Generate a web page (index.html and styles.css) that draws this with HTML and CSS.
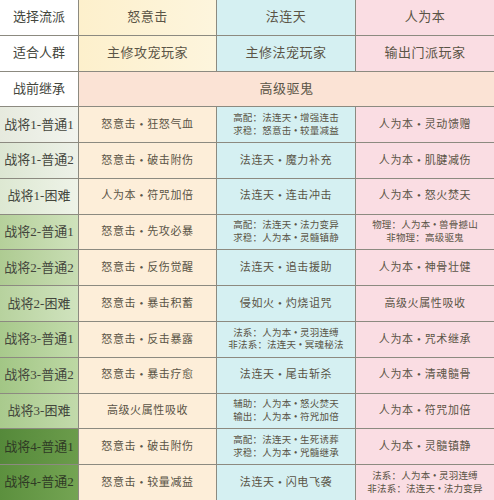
FILE: index.html
```html
<!DOCTYPE html>
<html lang="zh">
<head>
<meta charset="utf-8">
<link rel="stylesheet" href="styles.css">
</head>
<body>
<div class="table">
  <div class="cell label white">选择流派</div>
  <div class="cell head c-yellow">怒意击</div>
  <div class="cell head c-cyan">法连天</div>
  <div class="cell head c-pink">人为本</div>

  <div class="cell label white">适合人群</div>
  <div class="cell head c-yellow">主修攻宠玩家</div>
  <div class="cell head c-cyan">主修法宠玩家</div>
  <div class="cell head c-pink">输出门派玩家</div>

  <div class="cell label white">战前继承</div>
  <div class="cell head span3">高级驱鬼</div>

  <div class="cell label g1">战将1-普通1</div>
  <div class="cell c-cream">怒意击 • 狂怒气血</div>
  <div class="cell c-cyan small">高配：法连天 • 增强连击<br>求稳：怒意击 • 较量减益</div>
  <div class="cell c-pink">人为本 • 灵动馈赠</div>

  <div class="cell label g2">战将1-普通2</div>
  <div class="cell c-cream">怒意击 • 破击附伤</div>
  <div class="cell c-cyan">法连天 • 魔力补充</div>
  <div class="cell c-pink">人为本 • 肌腱减伤</div>

  <div class="cell label g3">战将1-困难</div>
  <div class="cell c-cream">人为本 • 符咒加倍</div>
  <div class="cell c-cyan">法连天 • 连击冲击</div>
  <div class="cell c-pink">人为本 • 怒火焚天</div>

  <div class="cell label g4">战将2-普通1</div>
  <div class="cell c-cream">怒意击 • 先攻必暴</div>
  <div class="cell c-cyan small">高配：法连天 • 法力变异<br>求稳：人为本 • 灵髓镇静</div>
  <div class="cell c-pink small">物理：人为本 • 兽骨撼山<br>非物理：高级驱鬼</div>

  <div class="cell label g5">战将2-普通2</div>
  <div class="cell c-cream">怒意击 • 反伤觉醒</div>
  <div class="cell c-cyan">法连天 • 追击援助</div>
  <div class="cell c-pink">人为本 • 神骨壮健</div>

  <div class="cell label g6">战将2-困难</div>
  <div class="cell c-cream">怒意击 • 暴击积蓄</div>
  <div class="cell c-cyan">侵如火 • 灼烧诅咒</div>
  <div class="cell c-pink">高级火属性吸收</div>

  <div class="cell label g7">战将3-普通1</div>
  <div class="cell c-cream">怒意击 • 反击暴露</div>
  <div class="cell c-cyan small">法系：人为本 • 灵羽连缚<br>非法系：法连天 • 冥魂秘法</div>
  <div class="cell c-pink">人为本 • 咒术继承</div>

  <div class="cell label g8">战将3-普通2</div>
  <div class="cell c-cream">怒意击 • 暴击疗愈</div>
  <div class="cell c-cyan">法连天 • 尾击斩杀</div>
  <div class="cell c-pink">人为本 • 清魂髓骨</div>

  <div class="cell label g9">战将3-困难</div>
  <div class="cell c-cream">高级火属性吸收</div>
  <div class="cell c-cyan small">辅助：人为本 • 怒火焚天<br>输出：人为本 • 符咒加倍</div>
  <div class="cell c-pink">人为本 • 符咒加倍</div>

  <div class="cell label g10">战将4-普通1</div>
  <div class="cell c-cream">怒意击 • 破击附伤</div>
  <div class="cell c-cyan small">高配：法连天 • 生死诱葬<br>求稳：人为本 • 咒髓继承</div>
  <div class="cell c-pink">人为本 • 灵髓镇静</div>

  <div class="cell label g11">战将4-普通2</div>
  <div class="cell c-cream">怒意击 • 较量减益</div>
  <div class="cell c-cyan">法连天 • 闪电飞袭</div>
  <div class="cell c-pink small">法系：人为本 • 灵羽连缚<br>非法系：法连天 • 法力变异</div>
</div>
</body>
</html>
```

FILE: styles.css
```css
html, body {
  margin: 0;
  padding: 0;
  background: #ffffff;
}

.table {
  display: grid;
  grid-template-columns: 78px 137px 138px 138px;
  grid-template-rows: repeat(14, 1fr);
  gap: 1px;
  width: 494px;
  height: 500px;
  background: #8c8a80;
  font-family: "Liberation Serif", "Noto Sans CJK SC", serif;
  color: #5a5446;
}

.cell {
  display: flex;
  align-items: center;
  justify-content: center;
  text-align: center;
  font-size: 11px;
  line-height: 1.25;
  white-space: nowrap;
  letter-spacing: 0.6px;
}

.cell.small {
  font-size: 9.5px;
  line-height: 1.35;
  letter-spacing: 0.2px;
}

.cell.head {
  font-size: 13px;
  letter-spacing: 0.5px;
}

.label {
  font-size: 13px;
  color: #43453c;
  letter-spacing: 0;
}

.white { background: #ffffff; }

.span3 {
  grid-column: 2 / span 3;
  background: #fbe3d5;
}

.c-yellow { background: linear-gradient(90deg, #fdf0cc, #fdf5dd); }
.c-cream { background: #fdeed9; }
.c-cyan { background: #d5f0f2; }
.c-pink { background: #fadde3; }

.g1 { background: linear-gradient(90deg, #e6eade, #f2f4ee); }
.g2 { background: linear-gradient(90deg, #dce6d2, #edf1e8); }
.g3 { background: linear-gradient(90deg, #dde8d2, #eef3e8); }
.g4 { background: linear-gradient(90deg, #b5d09a, #cfe2bc); }
.g5 { background: linear-gradient(90deg, #aecb92, #c8ddb3); }
.g6 { background: linear-gradient(90deg, #b7d29e, #d0e3be); }
.g7 { background: linear-gradient(90deg, #a8c98c, #c2dbab); }
.g8 { background: linear-gradient(90deg, #a2c685, #bdd8a4); }
.g9 { background: linear-gradient(90deg, #a9ca8d, #c2daab); }
.g10 { background: linear-gradient(90deg, #55893a, #6b9c4b); color: #2f3a25; }
.g11 { background: linear-gradient(90deg, #5c903e, #74a453); color: #2f3a25; }
```
